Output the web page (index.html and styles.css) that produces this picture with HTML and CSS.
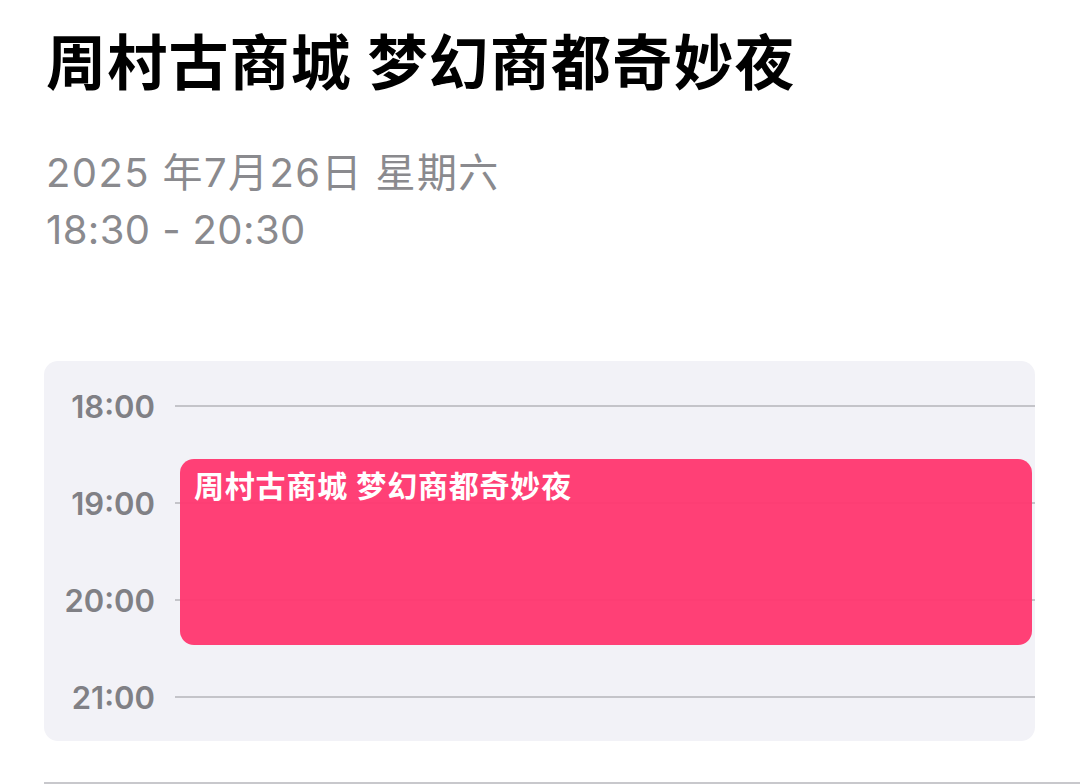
FILE: index.html
```html
<!DOCTYPE html>
<html lang="zh-CN">
<head>
<meta charset="utf-8">
<title>周村古商城 梦幻商都奇妙夜</title>
<link rel="stylesheet" href="styles.css">
</head>
<body>
<main class="page">
  <header class="header">
    <h1 class="title">周村古商城 梦幻商都奇妙夜</h1>
    <div class="meta">
      <div class="meta-line">2025 年7月26日 星期六</div>
      <div class="meta-line">18:30 - 20:30</div>
    </div>
  </header>

  <section class="day">
    <div class="hour"><span class="hour-label">18:00</span><span class="hour-line"></span></div>
    <div class="hour"><span class="hour-label">19:00</span><span class="hour-line"></span></div>
    <div class="hour"><span class="hour-label">20:00</span><span class="hour-line"></span></div>
    <div class="hour"><span class="hour-label">21:00</span><span class="hour-line"></span></div>
    <div class="event">周村古商城 梦幻商都奇妙夜</div>
  </section>

  <div class="divider"></div>
</main>
</body>
</html>
```

FILE: styles.css
```css
html, body {
  margin: 0;
  padding: 0;
  background: #ffffff;
}

body {
  width: 1080px;
  height: 784px;
  overflow: hidden;
  font-family: Inter, "Noto Sans CJK SC", sans-serif;
}

.page {
  padding-top: 27px;
}

.header {
  padding-left: 46px;
}

.title {
  margin: 0;
  font-size: 60px;
  line-height: 72px;
  font-weight: 700;
  color: #000000;
  letter-spacing: 1.2px;
}

.meta {
  margin-top: 45px;
  color: #8a8a8e;
  font-size: 40px;
  line-height: 57px;
}

.meta-line {
  white-space: nowrap;
  letter-spacing: 0.4px;
}

.meta-line:first-child {
  letter-spacing: 1.4px;
}

.day {
  position: relative;
  margin: 103px 45px 0 44px;
  padding: 21px 0 20px;
  background: #f2f2f7;
  border-radius: 14px;
  display: flex;
  flex-direction: column;
  gap: 49px;
}

.hour {
  display: flex;
  align-items: center;
  height: 48px;
}

.hour-label {
  width: 111px;
  text-align: right;
  font-size: 31px;
  font-weight: 600;
  color: #808085;
  flex: none;
}

.hour-line {
  flex: 1;
  height: 1.5px;
  margin-left: 20px;
  background: #c4c4c9;
}

.event {
  position: absolute;
  left: 136px;
  right: 3px;
  top: 98px;
  height: 186px;
  box-sizing: border-box;
  padding: 9px 14px;
  border-radius: 14px;
  background: rgba(255, 56, 112, 0.96);
  color: #ffffff;
  font-size: 30px;
  line-height: 36px;
  font-weight: 600;
  letter-spacing: 0.8px;
}

.divider {
  margin: 41px 0 0 44px;
  height: 1.5px;
  background: #c8c8cc;
}
```
